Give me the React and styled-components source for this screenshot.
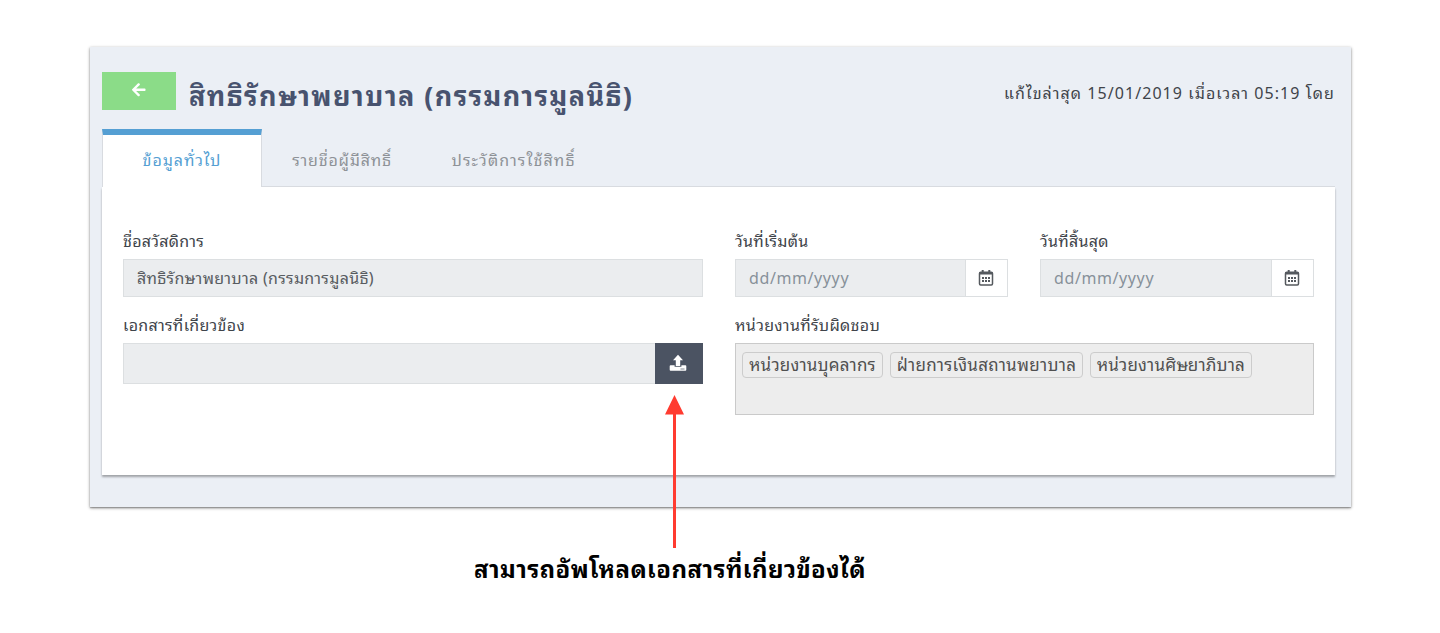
import React from "react";
import styled, { createGlobalStyle } from "styled-components";
import { FaArrowLeft } from "react-icons/fa";

const Global = createGlobalStyle`
  * { box-sizing: border-box; }
  body { margin: 0; background: #fff; font-family: "Noto Sans Thai Looped", "Loma", "Umpush", "Laksaman", "Waree", "Noto Sans", sans-serif; color: #40444a; }
`;

const Page = styled.main`
  position: relative;
  height: 633px;
  padding: 47px 89px 0 90px;
  overflow: hidden;
`;
const Frame = styled.section`
  height: 460px;
  padding: 25px 16px 0 12px;
  background: #ebeff5;
  box-shadow: 0 1px 3px rgba(0, 0, 0, 0.45), 0 1px 1px rgba(0, 0, 0, 0.18);
`;
const Header = styled.header`
  display: flex;
  height: 57px;
`;
const BackButton = styled.button`
  display: flex;
  align-items: center;
  justify-content: center;
  width: 73.5px;
  height: 38px;
  border: 0;
  padding: 0 0 2px 0;
  background: #8bdc88;
  color: #fff;
  font-size: 15.5px;
`;
const Text = styled.span`
  display: block;
  white-space: nowrap;
  font-size: ${(p) => p.$size || 16}px;
  line-height: ${(p) => p.$line || 24}px;
  font-weight: ${(p) => p.$weight || 400};
  letter-spacing: ${(p) => p.$track ?? 0.3}px;
`;
const Title = styled(Text).attrs({ as: "h1" })`
  margin: 2px 0 0 13.5px;
  color: #48536f;
`;
const Updated = styled(Text)`
  margin: 8px 0 0 auto;
`;
const Tabs = styled.nav`
  display: flex;
  height: 58px;
  border-bottom: 1px solid #d8dbe0;
`;
const Tab = styled.button`
  width: ${(p) => p.$width}px;
  height: 58px;
  border: 0 solid #d8dbe0;
  border-width: ${(p) => (p.$active ? "0 1px" : "0")};
  border-top: ${(p) => (p.$active ? 6 : 0)}px solid #559fd3;
  padding: ${(p) => (p.$active ? 0 : 6)}px 0 4px;
  background: ${(p) => (p.$active ? "#fff" : "transparent")};
  color: ${(p) => (p.$active ? "#559fd3" : "#8e9297")};
  font-family: inherit;
  display: flex;
  justify-content: center;
  align-items: center;
`;
const Card = styled.div`
  display: grid;
  grid-template-columns: 580px 579px;
  column-gap: 32px;
  height: 288px;
  padding: 41px 21px 0;
  align-content: start;
  background: #fff;
  box-shadow: 0 2px 2px rgba(0, 0, 0, 0.32);
`;
const Field = styled.div`
  height: ${(p) => p.$height || 84}px;
`;
const Label = styled(Text)`
  height: ${(p) => p.$height || 31}px;
`;
const Control = styled.div`
  display: flex;
  align-items: center;
  height: ${(p) => p.$height || 38}px;
  border: 1px solid #dcdfe1;
  background: #ebedef;
  color: ${(p) => (p.$muted ? "#87919a" : "#585c61")};
  padding-left: 13px;
`;
const Value = styled(Text)`
  padding-bottom: 2px;
`;
const Dates = styled.div`
  display: grid;
  grid-template-columns: 273px 274px;
  gap: 32px;
`;
const CalendarButton = styled.span`
  display: flex;
  align-items: center;
  justify-content: center;
  align-self: stretch;
  width: 42px;
  margin-left: auto;
  padding-right: 1px;
  border-left: 1px solid #dcdfe1;
  background: #fff;
`;
const UploadButton = styled.button`
  display: flex;
  align-items: center;
  justify-content: center;
  width: 48px;
  height: 41px;
  margin: 0 -1px 0 auto;
  border: 0;
  padding: 0 2px 2px 0;
  background: #4b5362;
`;
const TagBox = styled.div`
  display: flex;
  align-items: flex-start;
  gap: 7px;
  height: 72px;
  padding: 8px 6px;
  border: 1px solid #cacaca;
  background: #ededed;
`;
const Tag = styled.span`
  display: flex;
  justify-content: center;
  width: ${(p) => p.$width}px;
  height: 26px;
  border: 1px solid #ccc;
  border-radius: 4px;
  color: #505050;
`;
const Arrow = styled.svg`
  position: absolute;
  left: 664px;
  top: 395px;
`;
const Caption = styled(Text)`
  position: absolute;
  left: 474px;
  top: 549px;
  color: #000;
`;

const Calendar = () => (
  <svg width="16" height="18" viewBox="0 0 16 18" fill="none" stroke="#55595e">
    <rect x="1.5" y="3.2" width="13" height="12.8" rx="1.2" strokeWidth="1.5" />
    <path d="M1 4.4h14M4.7 1v3M11.3 1v3" strokeWidth="2" />
    <path d="M4 9h8M4 12h8" strokeWidth="1.9" strokeDasharray="2 1" />
  </svg>
);
const Upload = () => (
  <svg width="18" height="18" viewBox="0 0 18 18">
    <path fill="#fff" d="M9 .8l5 5.4h-2.8V12H6.8V6.2H4zM1.6 11.3h4v1.5h6.8v-1.5h4q.9 0 .9.9v3.6q0 .9-.9.9H1.6q-.9 0-.9-.9v-3.6q0-.9.9-.9z" />
    <path stroke="#4b5362" strokeWidth="0.7" d="M11.5 15h4" />
  </svg>
);
const DateField = ({ label }) => (
  <Field>
    <Label>{label}</Label>
    <Control $muted>
      <Value $track={0.6}>dd/mm/yyyy</Value>
      <CalendarButton><Calendar /></CalendarButton>
    </Control>
  </Field>
);

export default function App() {
  return (
    <Page>
      <Global />
      <Frame>
        <Header>
          <BackButton aria-label="Back"><FaArrowLeft /></BackButton>
          <Title $size={27} $line={40} $weight={700} $track={1.43}>สิทธิรักษาพยาบาล (กรรมการมูลนิธิ)</Title>
          <Updated $track={1.07}>แก้ไขล่าสุด 15/01/2019 เมื่อเวลา 05:19 โดย</Updated>
        </Header>
        <Tabs>
          <Tab $active $width={160}><Text $track={0.95}>ข้อมูลทั่วไป</Text></Tab>
          <Tab $width={160}><Text $track={0.8}>รายชื่อผู้มีสิทธิ์</Text></Tab>
          <Tab $width={183}><Text $track={1.1}>ประวัติการใช้สิทธิ์</Text></Tab>
        </Tabs>
        <Card>
          <Field>
            <Label>ชื่อสวัสดิการ</Label>
            <Control><Value>สิทธิรักษาพยาบาล (กรรมการมูลนิธิ)</Value></Control>
          </Field>
          <Dates>
            <DateField label="วันที่เริ่มต้น" />
            <DateField label="วันที่สิ้นสุด" />
          </Dates>
          <Field>
            <Label>เอกสารที่เกี่ยวข้อง</Label>
            <Control $height={41}><UploadButton aria-label="Upload"><Upload /></UploadButton></Control>
          </Field>
          <Field $height={102}>
            <Label>หน่วยงานที่รับผิดชอบ</Label>
            <TagBox>
              <Tag $width={141}><Text $size={17} $line={22} $track={0.2}>หน่วยงานบุคลากร</Text></Tag>
              <Tag $width={193}><Text $size={17} $line={22} $track={0.3}>ฝ่ายการเงินสถานพยาบาล</Text></Tag>
              <Tag $width={162}><Text $size={17} $line={22} $track={0.17}>หน่วยงานศิษยาภิบาล</Text></Tag>
            </TagBox>
          </Field>
        </Card>
      </Frame>
      <Arrow width="21" height="153" viewBox="0 0 21 153" fill="#ff3b30">
        <path d="M10.5 0L20 19.5H12V153H9V19.5H1z" />
      </Arrow>
      <Caption $size={24} $line={36} $weight={700} $track={0.45}>สามารถอัพโหลดเอกสารที่เกี่ยวข้องได้</Caption>
    </Page>
  );
}
